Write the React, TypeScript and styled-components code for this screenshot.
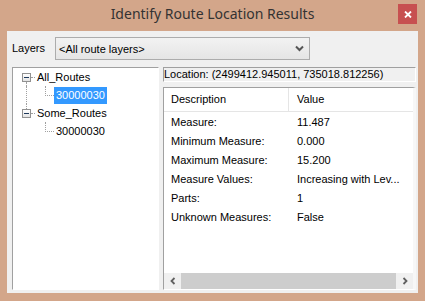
import React from 'react';
import styled, { createGlobalStyle } from 'styled-components';

const GlobalStyle = createGlobalStyle`
  html, body {
    margin: 0;
    padding: 0;
    background: #d3a68a;
  }
  body {
    font-family: "Liberation Sans", Arial, sans-serif;
    font-size: 11px;
    color: #000;
  }
`;

const dots = '1px dotted #a0a0a0';

const rows = [
  { label: 'Measure:', value: '11.487' },
  { label: 'Minimum Measure:', value: '0.000' },
  { label: 'Maximum Measure:', value: '15.200' },
  { label: 'Measure Values:', value: 'Increasing with Lev...' },
  { label: 'Parts:', value: '1' },
  { label: 'Unknown Measures:', value: 'False' },
];

const tree = [
  { name: 'All_Routes', children: [{ id: '30000030', selected: true }] },
  { name: 'Some_Routes', children: [{ id: '30000030', selected: false }] },
];

const Window = styled.div`
  width: 425px;
  height: 301px;
  background: #d3a68a;
  display: flex;
  flex-direction: column;
`;

const TitleBar = styled.div`
  height: 31px;
  display: grid;
  grid-template-columns: 1fr auto 1fr;
  align-items: start;
`;

const Title = styled.div`
  grid-column: 2;
  font-family: "Noto Sans", "Open Sans", sans-serif;
  font-size: 14px;
  line-height: 28px;
  color: #333;
  white-space: nowrap;
`;

const CloseButton = styled.div`
  grid-column: 3;
  justify-self: end;
  width: 19px;
  height: 20px;
  margin: 4px 8px 0 0;
  background: #c75050;
  display: flex;
  align-items: center;
  justify-content: center;
`;

const Client = styled.div`
  flex: 1;
  margin: 0 7px 8px 7px;
  background: #f0f0f0;
  display: flex;
  flex-direction: column;
  gap: 7px;
  padding: 6px 2px 3px 5px;
  box-sizing: border-box;
  min-height: 0;
`;

const TopRow = styled.div`
  height: 23px;
  display: flex;
  align-items: center;
`;

const FieldLabel = styled.div`
  width: 43px;
  line-height: 13px;
`;

const Combo = styled.div`
  width: 255px;
  height: 23px;
  box-sizing: border-box;
  border: 1px solid #acacac;
  background: linear-gradient(#f2f2f2, #e5e5e5);
  display: flex;
  align-items: center;
  justify-content: space-between;
  padding: 0 5px 0 3px;
`;

const Body = styled.div`
  flex: 1;
  display: flex;
  gap: 4px;
  min-height: 0;
`;

const Sunken = styled.div`
  box-sizing: border-box;
  border-top: 1px solid #a0a0a0;
  border-left: 1px solid #a0a0a0;
  border-right: 1px solid #fff;
  border-bottom: 1px solid #fff;
`;

const TreePanel = styled(Sunken)`
  width: 147px;
  background: #fff;
  display: flex;
  flex-direction: column;
`;

const TreeRow = styled.div`
  height: 18px;
  display: flex;
  align-items: flex-start;
  padding-left: 9px;
`;

const ExpanderCol = styled.div`
  width: 9px;
  height: 18px;
  display: flex;
  flex-direction: column;
`;

const Stub = styled.div<{ $line: boolean; $h: number }>`
  height: ${(p) => p.$h}px;
  margin-left: 4px;
  border-left: ${(p) => (p.$line ? dots : '1px solid transparent')};
`;

const ExpanderBox = styled.div`
  width: 9px;
  height: 9px;
  box-sizing: border-box;
  border: 1px solid #919191;
  background: linear-gradient(#fff, #e3e3e3);
  display: flex;
  align-items: center;
  justify-content: center;
  &::after {
    content: '';
    width: 5px;
    height: 1px;
    background: #1e395b;
  }
`;

const HDots = styled.div`
  width: 4px;
  margin-top: 9px;
  border-top: ${dots};
`;

const Gutter = styled.div<{ $line: boolean }>`
  width: 0;
  height: 18px;
  margin-left: 4px;
  margin-right: 18px;
  border-left: ${(p) => (p.$line ? dots : '1px solid transparent')};
`;

const Elbow = styled.div`
  width: 8px;
  height: 9px;
  border-left: ${dots};
  border-bottom: ${dots};
`;

const NodeLabel = styled.div<{ $selected?: boolean }>`
  margin-top: 1px;
  height: 17px;
  line-height: 17px;
  padding: 0 2px;
  white-space: nowrap;
  background: ${(p) => (p.$selected ? '#3399ff' : 'transparent')};
  color: ${(p) => (p.$selected ? '#fff' : '#000')};
`;

const RightCol = styled.div`
  flex: 1;
  display: flex;
  flex-direction: column;
  gap: 5px;
  min-width: 0;
`;

const LocationBar = styled(Sunken)`
  height: 15px;
  line-height: 13px;
  padding-left: 0;
  white-space: nowrap;
  overflow: hidden;
`;

const Grid = styled(Sunken)`
  flex: 1;
  background: #fff;
  display: flex;
  flex-direction: column;
  border-right: 3px solid #f7f7f7;
  min-height: 0;
`;

const HeaderRow = styled.div`
  height: 24px;
  box-sizing: border-box;
  display: flex;
  border-bottom: 1px solid #e5e5e5;
`;

const HeaderCell = styled.div<{ $w?: number }>`
  ${(p) => (p.$w ? `width: ${p.$w}px;` : 'flex: 1;')}
  box-sizing: border-box;
  padding-left: ${(p) => (p.$w ? 7 : 8)}px;
  line-height: 23px;
  border-right: ${(p) => (p.$w ? '1px solid #e5e5e5' : 'none')};
`;

const Rows = styled.div`
  flex: 1;
`;

const DataRow = styled.div`
  height: 19px;
  display: flex;
  align-items: center;
`;

const Cell = styled.div<{ $w?: number }>`
  ${(p) => (p.$w ? `width: ${p.$w}px;` : 'flex: 1;')}
  box-sizing: border-box;
  padding-left: ${(p) => (p.$w ? 7 : 8)}px;
  white-space: nowrap;
  overflow: hidden;
`;

const ScrollBar = styled.div`
  height: 16px;
  display: flex;
  background: #f0f0f0;
`;

const ScrollArrow = styled.div`
  width: 17px;
  display: flex;
  align-items: center;
  justify-content: center;
`;

const Thumb = styled.div`
  flex: 1;
  background: #cdcdcd;
`;

const Chevron = ({ dir }: { dir: 'left' | 'right' }) => (
  <svg width="6" height="8" viewBox="0 0 6 8">
    <path
      d={dir === 'left' ? 'M4.5 1 L1.5 4 L4.5 7' : 'M1.5 1 L4.5 4 L1.5 7'}
      fill="none"
      stroke="#606060"
      strokeWidth="1.8"
    />
  </svg>
);

const App = () => {
  return (
    <>
      <GlobalStyle />
      <Window>
        <TitleBar>
          <Title>Identify Route Location Results</Title>
          <CloseButton>
            <svg width="8" height="7" viewBox="0 0 8 7">
              <path d="M1 0.5 L7 6.5 M7 0.5 L1 6.5" stroke="#fff" strokeWidth="1.8" />
            </svg>
          </CloseButton>
        </TitleBar>
        <Client>
          <TopRow>
            <FieldLabel>Layers</FieldLabel>
            <Combo>
              <span>&lt;All route layers&gt;</span>
              <svg width="9" height="7" viewBox="0 0 9 7">
                <path d="M1 1.5 L4.5 5 L8 1.5" fill="none" stroke="#555" strokeWidth="2" />
              </svg>
            </Combo>
          </TopRow>
          <Body>
            <TreePanel>
              {tree.map((node, i) => (
                <React.Fragment key={node.name}>
                  <TreeRow>
                    <ExpanderCol>
                      <Stub $line={i > 0} $h={5} />
                      <ExpanderBox />
                      <Stub $line={i < tree.length - 1} $h={4} />
                    </ExpanderCol>
                    <HDots />
                    <NodeLabel>{node.name}</NodeLabel>
                  </TreeRow>
                  {node.children.map((c) => (
                    <TreeRow key={c.id}>
                      <Gutter $line={i < tree.length - 1} />
                      <Elbow />
                      <NodeLabel $selected={c.selected}>{c.id}</NodeLabel>
                    </TreeRow>
                  ))}
                </React.Fragment>
              ))}
            </TreePanel>
            <RightCol>
              <LocationBar>Location: (2499412.945011, 735018.812256)</LocationBar>
              <Grid>
                <HeaderRow>
                  <HeaderCell $w={125}>Description</HeaderCell>
                  <HeaderCell>Value</HeaderCell>
                </HeaderRow>
                <Rows>
                  {rows.map((r) => (
                    <DataRow key={r.label}>
                      <Cell $w={125}>{r.label}</Cell>
                      <Cell>{r.value}</Cell>
                    </DataRow>
                  ))}
                </Rows>
                <ScrollBar>
                  <ScrollArrow>
                    <Chevron dir="left" />
                  </ScrollArrow>
                  <Thumb />
                  <ScrollArrow>
                    <Chevron dir="right" />
                  </ScrollArrow>
                </ScrollBar>
              </Grid>
            </RightCol>
          </Body>
        </Client>
      </Window>
    </>
  );
};

export default App;
